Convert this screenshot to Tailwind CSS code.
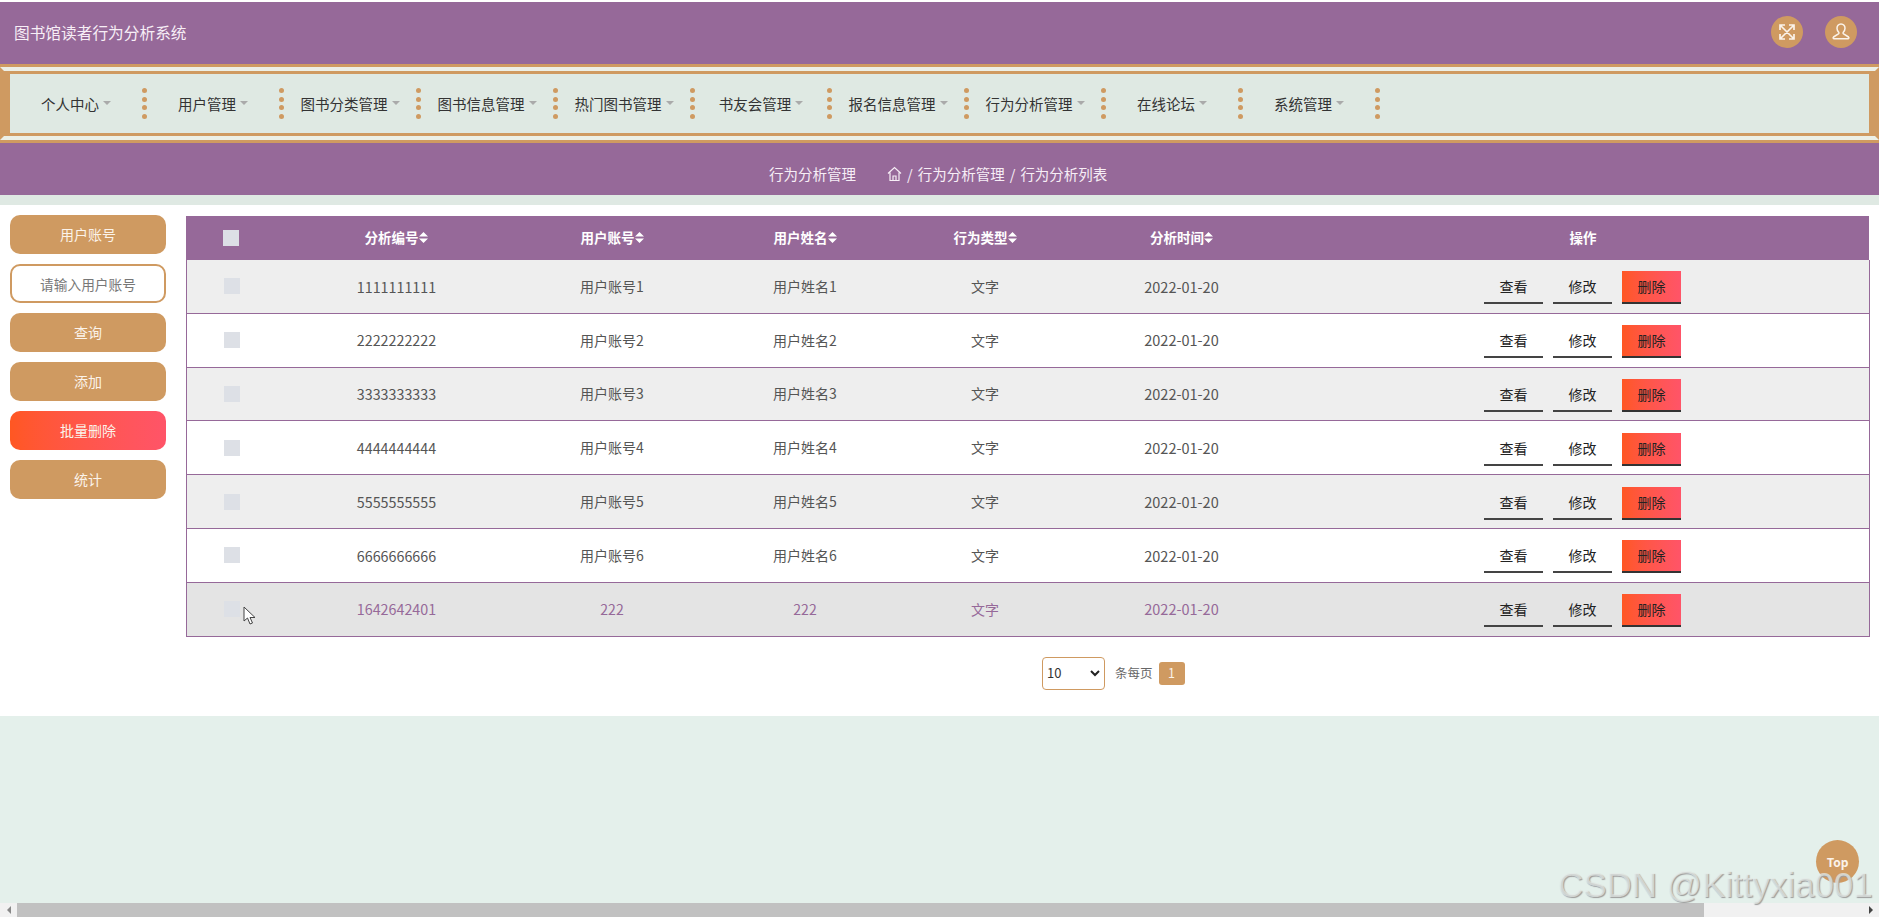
<!DOCTYPE html>
<html lang="zh-CN">
<head>
    <meta charset="UTF-8">
    <meta name="viewport" content="width=device-width, initial-scale=1.0">
    <title>图书馆读者行为分析系统</title>
    <script src="https://cdn.jsdelivr.net/npm/@tailwindcss/browser@4"></script>
</head>
<body class="relative h-screen overflow-hidden bg-white flex flex-col [font-family:'Noto_Sans_CJK_SC',sans-serif] text-[#555]">

    <!-- top bar -->
    <header class="mt-[2px] h-[62px] shrink-0 bg-[#966999] flex items-center pl-[14px] pr-[22px]">
        <h1 class="text-[15.7px] text-[#f7eef6]">图书馆读者行为分析系统</h1>
        <div class="ml-auto flex items-center gap-[22px] -mt-[2px]">
            <div class="w-8 h-8 rounded-full bg-[#cf9a61] flex items-center justify-center">
                <svg class="w-[18px] h-[18px]" viewBox="0 0 18 18" fill="none" stroke="#fbf3ea" stroke-width="1.7">
                    <path d="M2 2l14 14M16 2L2 16M2 7V2h5M11 2h5v5M16 11v5h-5M7 16H2v-5"/>
                </svg>
            </div>
            <div class="w-8 h-8 rounded-full bg-[#cf9a61] flex items-center justify-center">
                <svg class="w-[20px] h-[20px]" viewBox="0 0 20 20" fill="none" stroke="#fbf3ea" stroke-width="1.5">
                    <path d="M10 2c-2.600 0-4 2-4 4.200 0 1.800.9 3.200 1.700 4 .4.500.3 1.300-.3 1.700L2.500 15c-.6.400-.5 1.700.3 1.700h14.400c.8 0 .9-1.300.3-1.700l-4.900-3.100c-.6-.4-.7-1.200-.3-1.700.8-.8 1.700-2.200 1.700-4C14 4 12.600 2 10 2z"/>
                </svg>
            </div>
        </div>
    </header>

    <!-- nav -->
    <div class="shrink-0 border-y-[3px] border-[#cf9a61]">
        <div class="border-y-4 border-y-[#ecefe6] border-x-[4px] border-x-[#cf9a61]">
            <nav class="h-[65px] border-y-[3px] border-y-[#cf9a61] border-x-[6px] border-x-[#cf9a61] bg-[#dfe9e3] flex items-center">
                <div id="navItems" class="flex items-center"></div>
            </nav>
        </div>
    </div>

    <!-- breadcrumb -->
    <div class="h-[52px] shrink-0 bg-[#966999] text-[14.5px] text-[#f7eef6] flex items-center pl-[769px] pt-[9px]">
        <span>行为分析管理</span>
        <svg class="ml-[31px] w-[15px] h-[16px]" viewBox="0 0 15 16" fill="none" stroke="#f7eef6" stroke-width="1.200">
            <path d="M1 7.500L7.500 1.500 14 7.500M3 6.500V14.500H12V6.500M6 14.500V10H9V14.500"/>
        </svg>
        <span class="ml-[5px]">/</span>
        <span class="ml-[5px]">行为分析管理</span>
        <span class="ml-[5px]">/</span>
        <span class="ml-[5px]">行为分析列表</span>
    </div>
    <div class="h-[10px] shrink-0 bg-[#dfe9e3]"></div>

    <!-- main -->
    <main class="h-[511px] shrink-0 bg-white flex items-start pt-[10px] pl-[10px] pr-[9px]">
        <aside class="w-[156px] shrink-0 flex flex-col gap-[10px] text-[14px] text-[#fbf3ea] text-center">
            <div class="h-[39px] rounded-[10px] bg-[#cf9a61] flex items-center justify-center">用户账号</div>
            <input class="h-[39px] rounded-[10px] border-2 border-[#cf9a61] bg-white text-center text-[13.7px] outline-none placeholder:text-[#777]" placeholder="请输入用户账号">
            <div class="h-[39px] rounded-[10px] bg-[#cf9a61] flex items-center justify-center">查询</div>
            <div class="h-[39px] rounded-[10px] bg-[#cf9a61] flex items-center justify-center">添加</div>
            <div class="h-[39px] rounded-[10px] bg-gradient-to-r from-[#ff5722] to-[#ff5468] flex items-center justify-center">批量删除</div>
            <div class="h-[39px] rounded-[10px] bg-[#cf9a61] flex items-center justify-center">统计</div>
        </aside>

        <section class="ml-[20px] flex-1 min-w-0">
            <div class="h-[44px] mt-[1px] mr-[1px] bg-[#966999] grid grid-cols-[90px_240px_192px_194px_166px_227px_1fr] items-center text-center text-[13.5px] font-bold text-white">
                <div class="flex justify-center"><div class="w-4 h-4 bg-[#dcdfe6]"></div></div>
                <div id="head1" class="flex items-center justify-center -mt-[2px]"></div>
                <div id="head2" class="flex items-center justify-center -mt-[2px]"></div>
                <div id="head3" class="flex items-center justify-center -mt-[2px]"></div>
                <div id="head4" class="flex items-center justify-center -mt-[2px]"></div>
                <div id="head5" class="flex items-center justify-center -mt-[2px]"></div>
                <div class="pl-[2px] -mt-[2px]">操作</div>
            </div>
            <div id="rows" class="border-l border-r border-[#966999]"></div>

            <!-- pagination -->
            <div class="mt-[20px] ml-[856px] flex items-center text-[12.5px] text-[#666]">
                <div class="relative w-[63px] h-[33px]">
                    <select class="appearance-none w-full h-full border border-[#cf9a61] rounded-[4px] bg-white pl-[4px] text-[13px] text-[#333]">
                        <option>10</option>
                    </select>
                    <svg class="absolute right-[5px] top-[13px] w-[10px] h-[7px]" viewBox="0 0 10 7" fill="none" stroke="#222" stroke-width="2"><path d="M1 1l4 4 4-4"/></svg>
                </div>
                <span class="ml-[10px]">条每页</span>
                <span class="ml-[6px] w-[26px] h-[23px] rounded-[3px] bg-[#cf9a61] text-[#fbf3ea] flex items-center justify-center">1</span>
            </div>
        </section>
    </main>

    <div class="flex-1 bg-[#e4f0eb]"></div>

    <!-- fake horizontal scrollbar -->
    <div class="h-[14px] mb-[1px] shrink-0 bg-[#f1f1f1] flex items-center">
        <div class="w-[17px] flex justify-center"><div class="border-y-[4px] border-r-[4px] border-y-transparent border-r-[#888]"></div></div>
        <div class="w-[1687px] h-full bg-[#c1c1c1]"></div>
        <div class="ml-auto w-[17px] flex justify-center"><div class="border-y-[4px] border-l-[4px] border-y-transparent border-l-[#444]"></div></div>
    </div>

    <!-- overlays -->
    <div class="absolute left-[1816px] top-[840px] w-[43px] h-[43px] rounded-full bg-[#cf9a61] flex items-center justify-center text-[12px] font-bold text-[#fbf3ea]">Top</div>
    <div class="absolute left-[1558px] top-[865px] whitespace-nowrap [font-family:'Liberation_Sans',sans-serif] text-[34.9px] leading-[40px] text-[#e8eeeb]/70 [text-shadow:1px_1px_1px_#9c9c9c]">CSDN @Kittyxia001</div>
    <svg class="absolute left-[243px] top-[606px] w-[14px] h-[20px]" viewBox="0 0 14 20" fill="#fff" stroke="#444" stroke-width="1">
        <path d="M1 1v14l3.500-3 2.500 6 2.500-1-2.500-5.500H12z"/>
    </svg>

    <script>
        const menus = ['个人中心', '用户管理', '图书分类管理', '图书信息管理', '热门图书管理', '书友会管理', '报名信息管理', '行为分析管理', '在线论坛', '系统管理'];
        const dots = `<div class="flex flex-col gap-[3.400px]">
            <i class="w-[5px] h-[5px] rounded-full bg-[#cf9a61]"></i><i class="w-[5px] h-[5px] rounded-full bg-[#cf9a61]"></i>
            <i class="w-[5px] h-[5px] rounded-full bg-[#cf9a61]"></i><i class="w-[5px] h-[5px] rounded-full bg-[#cf9a61]"></i></div>`;
        document.getElementById('navItems').innerHTML = menus.map(name => `
            <div class="w-[137px] flex items-center">
                <div class="flex-1 flex items-center justify-center gap-[4px] text-[14.500px] text-[#333]">
                    <span>${name}</span>
                    <span class="border-x-[4px] border-t-[4px] border-x-transparent border-t-[#aaa]"></span>
                </div>
                ${dots}
            </div>`).join('');

        const sortIcon = `<svg class="w-[9px] h-[11px]" viewBox="0 0 9 11" fill="#fff"><path d="M4.500 0L9 4.500H0zM4.500 11L0 6.500h9z"/></svg>`;
        ['分析编号', '用户账号', '用户姓名', '行为类型', '分析时间'].forEach((title, i) => {
            document.getElementById('head' + (i + 1)).innerHTML = `<span>${title}</span>${sortIcon}`;
        });

        const data = [
            ['1111111111', '用户账号1', '用户姓名1'],
            ['2222222222', '用户账号2', '用户姓名2'],
            ['3333333333', '用户账号3', '用户姓名3'],
            ['4444444444', '用户账号4', '用户姓名4'],
            ['5555555555', '用户账号5', '用户姓名5'],
            ['6666666666', '用户账号6', '用户姓名6'],
            ['1642642401', '222', '222'],
        ];
        document.getElementById('rows').innerHTML = data.map((row, i) => {
            const last = i === data.length - 1;
            const rowClass = last ? 'bg-[#e4e4e4] text-[#966999]' : (i % 2 === 0 ? 'bg-[#eeeeee]' : 'bg-white');
            return `
            <div class="h-[53.800px] border-b border-[#966999] grid grid-cols-[90px_239px_192px_194px_166px_227px_1fr] items-center text-center text-[14px] ${rowClass}">
                <div class="flex justify-center"><div class="w-4 h-4 bg-[#dde0e6]"></div></div>
                <div class="text-[14.300px]">${row[0]}</div>
                <div>${row[1]}</div>
                <div>${row[2]}</div>
                <div>文字</div>
                <div class="text-[14.500px]">2022-01-20</div>
                <div class="flex justify-center gap-[10px] mt-[3px] pl-[1px] text-[14px] text-[#222]">
                    <span class="w-[59px] h-[33px] border-b-2 border-[#444] flex items-center justify-center">查看</span>
                    <span class="w-[59px] h-[33px] border-b-2 border-[#444] flex items-center justify-center">修改</span>
                    <span class="w-[59px] h-[33px] border-b-2 border-[#333] bg-gradient-to-r from-[#ff5722] to-[#ff5468] flex items-center justify-center">删除</span>
                </div>
            </div>`;
        }).join('');
    </script>
</body>
</html>
